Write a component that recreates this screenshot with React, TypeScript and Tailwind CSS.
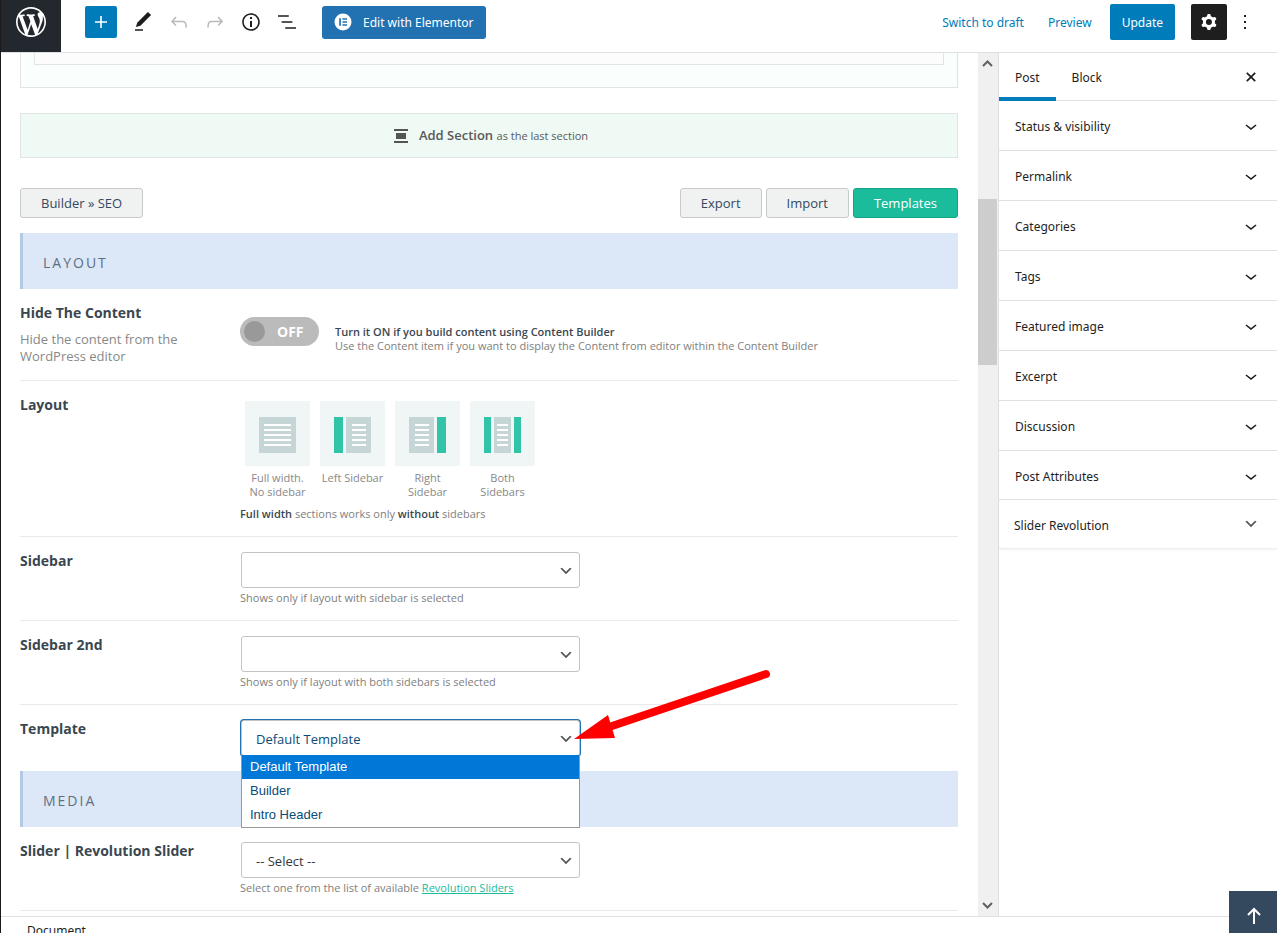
import type { ReactNode } from "react"

const Icon = ({ d, className = "" }: { d: string; className?: string }) => (
  <svg viewBox="0 0 24 24" width="24" height="24" fill="currentColor" fillRule="evenodd" className={className} aria-hidden="true">
    <path d={d} />
  </svg>
)

const icons = {
  plus: "M18 11.2h-5.2V6h-1.6v5.2H6v1.6h5.2V18h1.6v-5.2H18z",
  edit: "M20.1 5.1L16.9 2 6.2 12.7l-1.3 4.4 4.5-1.3L20.1 5.1zM4 20.8h8v-1.5H4v1.5z",
  undo: "M18.3 11.7c-.6-.6-1.4-.9-2.3-.9H6.7l2.9-3.3-1.1-1-4.5 5L8.5 16l1-1-2.7-2.7H16c.5 0 .9.2 1.3.5 1 1 1 3.4 1 4.5v.3h1.5v-.2c0-1.5 0-4.3-1.5-5.7z",
  redo: "M15.6 6.5l-1.1 1 2.9 3.3H8c-.9 0-1.7.3-2.3.9-1.4 1.5-1.4 4.2-1.4 5.6v.2h1.5v-.3c0-1.1 0-3.5 1-4.5.3-.3.7-.5 1.3-.5h9.2L14.5 15l1.1 1.1 4.6-4.6-4.6-5z",
  info: "M12 3.2c-4.8 0-8.8 3.9-8.8 8.8 0 4.8 3.9 8.8 8.8 8.8 4.8 0 8.8-3.9 8.8-8.8 0-4.8-4-8.8-8.8-8.8zm0 16c-4 0-7.2-3.3-7.2-7.2C4.8 8 8 4.8 12 4.8s7.2 3.3 7.2 7.2c0 4-3.2 7.2-7.2 7.2zM11 17h2v-6h-2v6zm0-8h2V7h-2v2z",
  outline: "M13.8 5.2H3v1.5h10.8V5.2zm-3.6 12v1.5H21v-1.5H10.2zm7.2-6H6.6v1.5h10.8v-1.5z",
  dots: "M13 19h-2v-2h2v2zm0-6h-2v-2h2v2zm0-6h-2V5h2v2z",
  chevron: "M17.5 11.6L12 16l-5.5-4.4.9-1.2L12 14l4.5-3.6 1 1.2z",
  close: "M13.2 12l3.6-3.6-1.2-1.2-3.6 3.6-3.6-3.6-1.2 1.2 3.6 3.6-3.6 3.6 1.2 1.2 3.6-3.6 3.6 3.6 1.2-1.2z",
  cog: "M10.289 4.836A1 1 0 0111.275 4h1.306a1 1 0 01.987.836l.244 1.466c.787.26 1.503.679 2.108 1.218l1.393-.522a1 1 0 011.216.437l.653 1.13a1 1 0 01-.23 1.273l-1.148.944a6.025 6.025 0 010 2.435l1.149.946a1 1 0 01.23 1.272l-.653 1.13a1 1 0 01-1.216.437l-1.394-.522c-.605.54-1.32.958-2.108 1.218l-.244 1.466a1 1 0 01-.987.836h-1.306a1 1 0 01-.986-.836l-.244-1.466a5.995 5.995 0 01-2.108-1.218l-1.394.522a1 1 0 01-1.217-.436l-.653-1.131a1 1 0 01.23-1.272l1.149-.946a6.026 6.026 0 010-2.435l-1.148-.944a1 1 0 01-.23-1.272l.653-1.131a1 1 0 011.217-.437l1.393.522a5.994 5.994 0 012.108-1.218l.244-1.466zM14.929 12a3 3 0 11-6 0 3 3 0 016 0z",
}

const WordPressLogo = () => (
  <svg viewBox="0 0 20 20" width="30" height="30" fill="currentColor" aria-hidden="true">
    <path d="M20 10c0-5.51-4.49-10-10-10C4.48 0 0 4.49 0 10c0 5.52 4.48 10 10 10 5.51 0 10-4.48 10-10zM7.78 15.37L4.37 6.22c.55-.02 1.17-.08 1.17-.08.5-.06.44-1.13-.06-1.11 0 0-1.45.11-2.37.11-.18 0-.37 0-.58-.01C4.12 2.69 6.87 1.11 10 1.11c2.33 0 4.45.87 6.05 2.34-.68-.11-1.65.39-1.65 1.58 0 .74.45 1.36.9 2.1.35.61.55 1.36.55 2.46 0 1.49-1.4 5-1.4 5l-3.03-8.37c.54-.02.82-.17.82-.17.5-.05.44-1.25-.06-1.22 0 0-1.44.12-2.38.12-.87 0-2.33-.12-2.33-.12-.5-.03-.56 1.2-.06 1.22l.92.08 1.26 3.41zM17.41 10c.24-.64.74-1.87.43-4.25.7 1.29 1.05 2.71 1.05 4.25 0 3.29-1.73 6.24-4.4 7.78.97-2.59 1.94-5.2 2.92-7.78zM6.1 18.09C3.12 16.65 1.11 13.53 1.11 10c0-1.3.23-2.48.72-3.59C3.25 10.3 4.67 14.2 6.1 18.09zm4.03-6.63l2.58 6.98c-.86.29-1.76.45-2.71.45-.79 0-1.57-.11-2.29-.33.81-2.38 1.62-4.74 2.42-7.1z" />
  </svg>
)

const ToolButton = ({ icon, label, className = "text-[#1e1e1e]" }: { icon: string; label: string; className?: string }) => (
  <button type="button" aria-label={label} className={`flex h-9 w-9 items-center justify-center ${className}`}>
    <Icon d={icon} />
  </button>
)

const Header = () => (
  <header className="flex shrink-0 items-start border-b border-[#e0e0e0] bg-white text-xs">
    <a href="#" aria-label="View posts" className="flex h-[52px] w-[60px] justify-center bg-[#23282e] pt-[7px] text-white">
      <WordPressLogo />
    </a>
    <div className="flex h-11 items-center pl-6">
      <button type="button" aria-label="Add block" className="mr-2 flex h-8 w-8 items-center justify-center rounded-xs bg-[#007cba] text-white">
        <Icon d={icons.plus} />
      </button>
      <ToolButton icon={icons.edit} label="Tools" />
      <ToolButton icon={icons.undo} label="Undo" className="text-[#b9b9b9]" />
      <ToolButton icon={icons.redo} label="Redo" className="text-[#b9b9b9]" />
      <ToolButton icon={icons.info} label="Details" />
      <ToolButton icon={icons.outline} label="Outline" />
      <button type="button" className="ml-[17px] flex h-[33px] items-center gap-[11px] rounded-[3px] bg-[#2271b1] px-3 text-white">
        <svg viewBox="0 0 18 18" width="18" height="18" aria-hidden="true">
          <circle cx="9" cy="9" r="8.5" fill="#fff" />
          <path d="M5.2 5.2h1.7v7.6H5.2zM8.4 5.2h4.6v1.6H8.4zM8.4 8.2h4.6v1.6H8.4zM8.4 11.2h4.6v1.6H8.4z" fill="#2271b1" />
        </svg>
        <span className="pt-0.5">Edit with Elementor</span>
      </button>
    </div>
    <div className="ml-auto flex h-11 items-center pr-5 text-[#007cba]">
      <button type="button" className="mr-6 pt-0.5">Switch to draft</button>
      <button type="button" className="mr-[18px] pt-0.5">Preview</button>
      <button type="button" className="mr-4 h-9 rounded-xs bg-[#007cba] px-3 pt-0.5 text-white">Update</button>
      <button type="button" aria-label="Settings" className="flex h-9 w-9 items-center justify-center rounded-xs bg-[#1e1e1e] text-white">
        <Icon d={icons.cog} />
      </button>
      <button type="button" aria-label="Options" className="ml-1.5 text-[#1e1e1e]">
        <Icon d={icons.dots} />
      </button>
    </div>
  </header>
)

const SectionTitle = ({ children }: { children: ReactNode }) => (
  <h2 className="flex h-14 items-center border-l-3 border-[#b5c9e6] bg-[#dce7f8] pt-1 pl-5 text-sm tracking-[2px] text-[#5f6f7f]">
    {children}
  </h2>
)

const Row = ({ title, htmlFor, desc, last, children }: { title: string; htmlFor?: string; desc?: string; last?: boolean; children: ReactNode }) => (
  <div className={`flex ${last ? "pb-[15px]" : "border-b border-[#e8e9ea] pb-3"}`}>
    <div className="w-[220px] shrink-0 pt-[14px]">
      <label htmlFor={htmlFor} className="block text-sm leading-5 font-bold text-[#3a4750]">{title}</label>
      {desc && <p className="mt-2 w-44 text-[13px] leading-[17px] text-[#888]">{desc}</p>}
    </div>
    <div className="min-w-0 grow">{children}</div>
  </div>
)

const Hint = ({ children }: { children: ReactNode }) => (
  <p className="text-[11px] leading-5 text-[#808080]">{children}</p>
)

const Select = ({ id, value, open }: { id: string; value?: string; open?: boolean }) => (
  <div className="relative mt-[15px] ml-px w-[339px]">
    <select
      id={id}
      className={`block h-9 w-full appearance-none rounded-[3px] border border-[#c3c4c7] bg-white pt-1 pl-[14px] text-[13px] outline-none ${open ? "text-[#0a4b78] ring-1 ring-[#2271b1]" : "text-[#32373c]"}`}
    >
      <option>{value}</option>
    </select>
    <svg viewBox="0 0 20 20" width="16" height="16" className="pointer-events-none absolute top-[11px] right-1.5" aria-hidden="true">
      <path d="M5 6l5 5 5-5 2 1-7 7-7-7 2-1z" fill="#555" />
    </svg>
    {open && (
      <ul className="absolute top-[35px] left-0 z-10 w-full border border-t-0 border-[#999] bg-white font-['Liberation_Sans',Arial,sans-serif] text-[13px] leading-6 text-[#0a4b78]">
        <li className="bg-[#0078d7] pl-2 text-white">Default Template</li>
        <li className="pl-2">Builder</li>
        <li className="pl-2">Intro Header</li>
      </ul>
    )}
  </div>
)

const Lines = ({ x, w }: { x: number; w: number }) => (
  <>
    {[23, 28, 33, 38, 43].map((y) => (
      <rect key={y} x={x} y={y} width={w} height="2" fill="#fff" />
    ))}
  </>
)

const layouts = [
  { name: "Full width. No sidebar", page: [14, 37], lines: [19, 27], bars: [] },
  { name: "Left Sidebar", page: [26, 25], lines: [32, 14], bars: [[14, 9]] },
  { name: "Right Sidebar", page: [14, 25], lines: [20, 14], bars: [[42, 9]] },
  { name: "Both Sidebars", page: [24, 17], lines: [27, 11], bars: [[14, 7], [44, 7]] },
]

const LayoutPicker = () => (
  <div className="flex pt-5">
    {layouts.map((l) => (
      <label key={l.name} className="w-[75px] text-center text-[11px] leading-[14px] text-[#888]">
        <input type="radio" name="layout" className="sr-only" />
        <svg viewBox="0 0 65 65" width="65" height="65" className="mx-auto mb-[5px] block" aria-hidden="true">
          <rect width="65" height="65" fill="#f0f6f6" />
          <rect x={l.page[0]} y="16" width={l.page[1]} height="36" fill="#c6d6d7" />
          {l.bars.map(([x, w]) => (
            <rect key={x} x={x} y="16" width={w} height="36" fill="#32c4a6" />
          ))}
          <Lines x={l.lines[0]} w={l.lines[1]} />
        </svg>
        <span className="block px-1">{l.name}</span>
      </label>
    ))}
  </div>
)

const grayButton = "h-[30px] rounded-[3px] border border-[#c8caca] bg-[#f0f2f2] px-5 pt-px text-[#34495e]"

const Content = () => (
  <main className="min-w-0 grow overflow-hidden pr-5 pl-[19px] font-['Open_Sans',sans-serif] text-[13px]">
    <div className="h-[35px] border border-t-0 border-[#e1e4e4] bg-[#fafffe] px-[13px]">
      <div className="h-3 border border-t-0 border-[#e1e4e4] bg-[#fcfcfc]"></div>
    </div>

    <button type="button" className="mt-[25px] flex h-[45px] w-full items-center justify-center border border-[#e1e4e4] bg-[#effaf5] pl-1 text-[#595959]">
      <svg viewBox="0 0 14 14" width="14" height="14" className="mr-[11px]" aria-hidden="true">
        <path d="M0 0h14v2H0zM2 4h10v6H2zM0 12h14v2H0z" fill="#555" />
      </svg>
      <span><b className="font-semibold">Add Section</b> <span className="text-[11px]">as the last section</span></span>
    </button>

    <div className="mt-[30px] mb-[15px] flex gap-1">
      <button type="button" className={`${grayButton} mr-auto`}>Builder » SEO</button>
      <button type="button" className={grayButton}>Export</button>
      <button type="button" className={grayButton}>Import</button>
      <button type="button" className="h-[30px] rounded-[3px] border border-[#16a386] bg-[#1abc9c] px-5 pt-px text-white">Templates</button>
    </div>

    <SectionTitle>LAYOUT</SectionTitle>
    <Row title="Hide The Content" htmlFor="hide" desc="Hide the content from the WordPress editor">
      <div className="flex items-start pt-7">
        <button id="hide" type="button" role="switch" aria-checked="false" className="flex h-[29px] w-[79px] shrink-0 items-center rounded-full bg-[#bbb] pl-1 text-sm font-bold text-white">
          <span className="mr-3 h-[21px] w-[21px] rounded-full bg-[#999]"></span>
          OFF
        </button>
        <p className="mt-2 mb-[15px] ml-4 text-[11px] leading-[14px] text-[#808080]">
          <b className="font-semibold text-[#3a4750]">Turn it ON if you build content using Content Builder</b>
          <br />
          Use the Content item if you want to display the Content from editor within the Content Builder
        </p>
      </div>
    </Row>
    <Row title="Layout">
      <LayoutPicker />
      <div className="mt-[5px]">
        <Hint><b className="font-semibold text-[#3a4750]">Full width</b> sections works only <b className="font-semibold text-[#3a4750]">without</b> sidebars</Hint>
      </div>
    </Row>
    <Row title="Sidebar" htmlFor="sidebar">
      <Select id="sidebar" />
      <Hint>Shows only if layout with sidebar is selected</Hint>
    </Row>
    <Row title="Sidebar 2nd" htmlFor="sidebar2">
      <Select id="sidebar2" />
      <Hint>Shows only if layout with both sidebars is selected</Hint>
    </Row>
    <Row title="Template" htmlFor="template" last>
      <div className="relative">
        <Select id="template" value="Default Template" open />
        <svg viewBox="0 0 200 80" width="200" height="80" className="absolute -top-[51px] left-[333px] z-20" aria-hidden="true">
          <path d="M193 5L39 57" stroke="red" strokeWidth="8" strokeLinecap="round" />
          <path d="M1 70L35 46L42 69z" fill="red" />
        </svg>
      </div>
    </Row>

    <SectionTitle>MEDIA</SectionTitle>
    <Row title="Slider | Revolution Slider" htmlFor="slider">
      <Select id="slider" value="-- Select --" />
      <Hint>Select one from the list of available <a href="#" className="text-[#1abc9c] underline">Revolution Sliders</a></Hint>
    </Row>
  </main>
)

const Scrollbar = () => (
  <div className="flex w-5 shrink-0 flex-col bg-[#f0f0f0] text-[#606060]" aria-hidden="true">
    <svg viewBox="0 0 19 20" width="19" height="20">
      <path d="M5 13l4.500-4.500L14 13" fill="none" stroke="currentColor" strokeWidth="2" />
    </svg>
    <div className="mt-[126px] h-[166px] w-[19px] bg-[#cdcdcd]"></div>
    <svg viewBox="0 0 19 20" width="19" height="20" className="mt-auto">
      <path d="M5 7l4.500 4.500L14 7" fill="none" stroke="currentColor" strokeWidth="2" />
    </svg>
  </div>
)

const panels = ["Status & visibility", "Permalink", "Categories", "Tags", "Featured image", "Excerpt", "Discussion", "Post Attributes"]

const Sidebar = () => (
  <aside className="w-[279px] shrink-0 border-l border-[#e0e0e0] text-xs text-[#1e1e1e]">
    <div className="flex h-12 items-stretch border-b border-[#e0e0e0]">
      <button type="button" className="-mb-px border-b-4 border-[#007cba] px-4 pt-1.5">Post</button>
      <button type="button" className="px-4 pt-0.5">Block</button>
      <button type="button" aria-label="Close settings" className="mr-[14px] ml-auto">
        <Icon d={icons.close} />
      </button>
    </div>
    {panels.map((name) => (
      <button key={name} type="button" className="flex h-[50px] w-full items-center justify-between border-b border-[#e0e0e0] pt-px pr-[14px] pl-4 text-left last-of-type:h-[49px]">
        <span className="pt-0.5">{name}</span>
        <Icon d={icons.chevron} />
      </button>
    ))}
    <div className="border-b border-[#eee] shadow-xs">
      <button type="button" className="flex h-12 w-full items-center justify-between pr-[18px] pl-[15px] text-left">
        <span className="pt-1">Slider Revolution</span>
        <svg viewBox="0 0 20 20" width="16" height="16" aria-hidden="true">
          <path d="M5 6l5 5 5-5 2 1-7 7-7-7 2-1z" fill="#555" />
        </svg>
      </button>
    </div>
  </aside>
)

const App = () => {
  return (
    <div className="relative flex h-screen flex-col overflow-hidden border-l border-[#1d1a1c] bg-white font-['Noto_Sans',sans-serif]">
      <Header />
      <div className="flex min-h-0 grow">
        <Content />
        <Scrollbar />
        <Sidebar />
      </div>
      <footer className="h-[17px] shrink-0 overflow-hidden border-t border-[#e0e0e0] pt-1 pl-[26px] text-xs leading-5 text-[#1e1e1e]">
        Document
      </footer>
      <button type="button" aria-label="Back to top" className="absolute right-0 bottom-0 flex h-[42px] w-12 items-center justify-center bg-[#34495e] pt-2 pl-0.5">
        <svg viewBox="0 0 16 18" width="16" height="18" fill="none" stroke="#fff" strokeWidth="2" aria-hidden="true">
          <path d="M8 17V2M2 8l6-6 6 6" />
        </svg>
      </button>
    </div>
  )
}

export default App
